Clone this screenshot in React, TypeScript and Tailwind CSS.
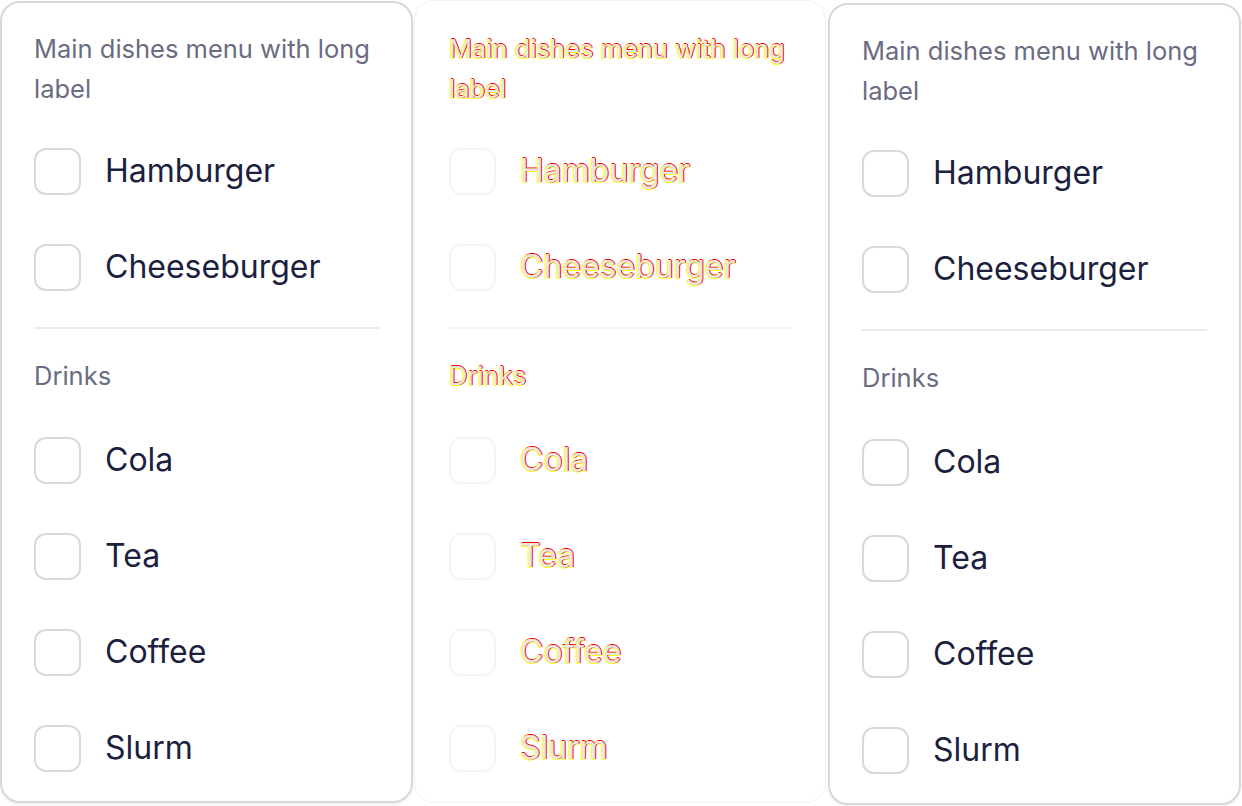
import React from 'react';

type Variant = 'normal' | 'diff';

const mainDishes = ['Hamburger', 'Cheeseburger'];
const drinks = ['Cola', 'Tea', 'Coffee', 'Slurm'];

const diffText =
  'text-[#e6e6e6] [text-shadow:1px_0_0_#ff0000,-1px_0_0_#ffff00,0_1px_0_#ffff00,0_-1px_0_#ff0000]';

const Row = ({ label, variant }: { label: string; variant: Variant }) => (
  <label className="flex items-center h-[96px] gap-6">
    <span
      className={`w-[47px] h-[47px] rounded-xl border-2 shrink-0 bg-white ${
        variant === 'diff' ? 'border-[#f5f5f5]' : 'border-[#d9d9dc]'
      }`}
    />
    <span
      className={`text-[32px] leading-[40px] ${
        variant === 'diff' ? diffText : 'text-[#1c1f3e]'
      }`}
    >
      {label}
    </span>
  </label>
);

const Panel = ({ variant, className }: { variant: Variant; className: string }) => {
  const heading =
    variant === 'diff' ? `text-[25.5px] ${diffText}` : 'text-[25.5px] text-[#6a6c82]';

  return (
    <div
      className={`flex flex-col rounded-[20px] bg-white pr-8 pt-[26px] ${className} ${
        variant === 'diff'
          ? 'border border-[#f1f1f1]'
          : 'border-2 border-[#d8d8d8] shadow-[0_2px_3px_rgba(0,0,0,0.05)]'
      }`}
    >
      <div className={`leading-[40px] ${heading}`}>Main dishes menu with long label</div>
      <div className="mt-[14px] flex flex-col">
        {mainDishes.map((item) => (
          <Row key={item} label={item} variant={variant} />
        ))}
      </div>
      <div
        className={`mt-3 h-[2px] ${variant === 'diff' ? 'bg-[#f7f7f7]' : 'bg-[#ebebeb]'}`}
      />
      <div className={`mt-[27px] leading-[40px] ${heading}`}>Drinks</div>
      <div className="mt-4 flex flex-col">
        {drinks.map((item) => (
          <Row key={item} label={item} variant={variant} />
        ))}
      </div>
    </div>
  );
};

export default function App() {
  return (
    <div className="w-[1242px] h-[806px] overflow-hidden bg-white font-['Inter','Noto_Sans',sans-serif]">
      <div className="flex items-start">
        <Panel variant="normal" className="w-[413px] h-[802px] mt-px pl-8" />
        <Panel variant="diff" className="w-[412px] h-[803px] ml-px pl-[34px] pt-[28px]" />
        <Panel variant="normal" className="w-[413px] h-[802px] ml-[2px] mt-[3px] pl-8" />
      </div>
    </div>
  );
}
